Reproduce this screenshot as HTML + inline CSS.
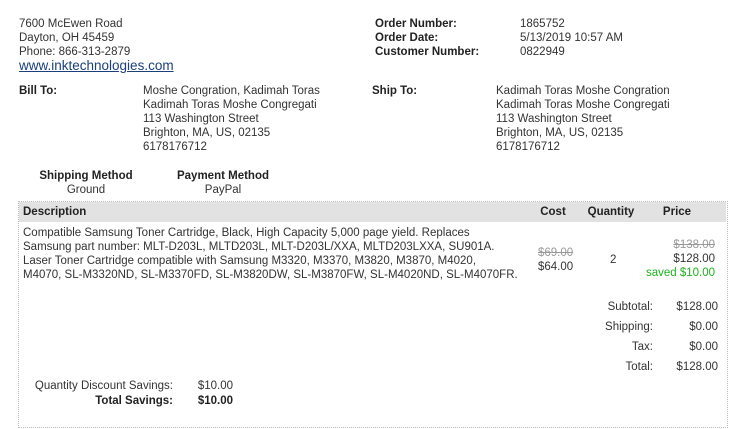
<!DOCTYPE html>
<html><head><style>
body{margin:0;width:743px;height:429px;background:#fff;font-family:"Liberation Sans",Arial,sans-serif;font-size:11.5px;color:#333;position:relative;overflow:hidden}
.a{position:absolute;white-space:nowrap;line-height:14px}
b{color:#222}
.r{text-align:right}
.c{text-align:center}
a{color:#1a3f7a}
</style></head><body>
<div class="a" style="left:19px;top:17px">7600 McEwen Road<br>Dayton, OH 45459<br>Phone: 866-313-2879<br><a href="#" style="font-size:13.5px">www.inktechnologies.com</a></div>
<div class="a" style="left:375px;top:17px"><b>Order Number:<br>Order Date:<br>Customer Number:</b></div>
<div class="a" style="left:520px;top:17px">1865752<br>5/13/2019 10:57 AM<br>0822949</div>
<div class="a" style="left:19px;top:84px"><b>Bill To:</b></div>
<div class="a" style="left:143px;top:84px">Moshe Congration, Kadimah Toras<br>Kadimah Toras Moshe Congregati<br>113 Washington Street<br>Brighton, MA, US, 02135<br>6178176712</div>
<div class="a" style="left:372px;top:84px"><b>Ship To:</b></div>
<div class="a" style="left:496px;top:84px">Kadimah Toras Moshe Congration<br>Kadimah Toras Moshe Congregati<br>113 Washington Street<br>Brighton, MA, US, 02135<br>6178176712</div>
<div class="a c" style="left:26px;width:120px;top:169px"><b>Shipping Method</b><br>Ground</div>
<div class="a c" style="left:163px;width:120px;top:169px"><b>Payment Method</b><br>PayPal</div>
<div style="position:absolute;left:18px;top:201px;width:708px;height:225px;border:1px dotted #bbb"></div>
<div style="position:absolute;left:19px;top:202px;width:707px;height:20px;background:#e2e2e2"></div>
<div class="a" style="left:23px;top:205px"><b>Description</b></div>
<div class="a c" style="left:528px;width:50px;top:205px"><b>Cost</b></div>
<div class="a c" style="left:580px;width:62px;top:205px"><b>Quantity</b></div>
<div class="a c" style="left:650px;width:54px;top:205px"><b>Price</b></div>
<div class="a" style="left:23px;top:226px">Compatible Samsung Toner Cartridge, Black, High Capacity 5,000 page yield. Replaces<br>Samsung part number: MLT-D203L, MLTD203L, MLT-D203L/XXA, MLTD203LXXA, SU901A.<br>Laser Toner Cartridge compatible with Samsung M3320, M3370, M3820, M3870, M4020,<br>M4070, SL-M3320ND, SL-M3370FD, SL-M3820DW, SL-M3870FW, SL-M4020ND, SL-M4070FR.</div>
<div class="a" style="left:538px;top:246px;color:#999;text-decoration:line-through">$69.00</div>
<div class="a" style="left:538px;top:260px">$64.00</div>
<div class="a" style="left:610px;top:253px">2</div>
<div class="a r" style="left:615px;width:100px;top:238px;color:#999;text-decoration:line-through">$138.00</div>
<div class="a r" style="left:615px;width:100px;top:252px">$128.00</div>
<div class="a r" style="left:615px;width:100px;top:266px;color:#1bb31b">saved $10.00</div>
<div class="a r" style="left:553px;width:100px;top:297px;line-height:20px">Subtotal:<br>Shipping:<br>Tax:<br>Total:</div>
<div class="a r" style="left:618px;width:100px;top:297px;line-height:20px">$128.00<br>$0.00<br>$0.00<br>$128.00</div>
<div class="a r" style="left:13px;width:160px;top:379px;line-height:15px">Quantity Discount Savings:<br><b>Total Savings:</b></div>
<div class="a r" style="left:173px;width:60px;top:379px;line-height:15px">$10.00<br><b>$10.00</b></div>
</body></html>
